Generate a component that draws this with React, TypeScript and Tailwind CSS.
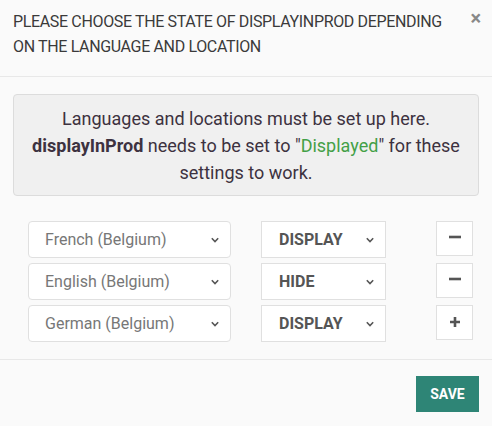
const rows = [
  { lang: 'French (Belgium)', state: 'DISPLAY', last: false },
  { lang: 'English (Belgium)', state: 'HIDE', last: false },
  { lang: 'German (Belgium)', state: 'DISPLAY', last: true },
]

function Chevron() {
  return (
    <svg width="10" height="7" viewBox="0 0 10 7" className="absolute right-[10px] top-1/2 -translate-y-1/2 pointer-events-none">
      <path d="M1.8 1.8 L5 5 L8.2 1.8" fill="none" stroke="#555" strokeWidth="1.6" />
    </svg>
  )
}

export default function App() {
  return (
    <div className="w-[492px] h-[426px] bg-[#fafafa] font-['Roboto',sans-serif] flex flex-col">
      <div className="h-[77px] border-b border-[#e8e8e8] flex justify-between pl-[13px] pr-[11px] pt-[9px]">
        <h2 className="text-[16px] leading-[25px] tracking-[-0.35px] text-[#3a3a3a] uppercase w-[450px]">
          Please choose the state of displayInProd depending on the language and location
        </h2>
        <span className="text-[#888] text-[20px] leading-[20px] font-bold mt-[-1px]">×</span>
      </div>

      <div className="flex-1 px-[13px] pt-[17px]">
        <div className="h-[102px] bg-[#f0f0f0] border border-[#dcdcdc] rounded-[4px] flex flex-col items-center justify-center text-center text-[18px] leading-[27px] text-[#3d3240] px-3">
          <p>Languages and locations must be set up here.</p>
          <p>
            <b className="font-bold">displayInProd</b> needs to be set to "<span className="text-[#43a047]">Displayed</span>" for these
          </p>
          <p>settings to work.</p>
        </div>

        <div className="mt-[25px] flex flex-col gap-[5px] pl-[15px]">
          {rows.map((r, i) => (
            <div key={i} className="flex items-start h-[37px]">
              <div className="relative w-[203px] h-[37px] bg-white border border-[#e0e0e0] rounded-[4px] flex items-center pl-[16px] text-[16px] text-[#777]">
                {r.lang}
                <Chevron />
              </div>
              <div className="relative ml-[30px] w-[125px] h-[37px] bg-white border border-[#e0e0e0] flex items-center pl-[17px] text-[16px] font-bold text-[#555]">
                {r.state}
                <Chevron />
              </div>
              <button className="ml-[50px] w-[37px] h-[35px] bg-white border border-[#e0e0e0] flex items-center justify-center">
                {r.last ? (
                  <svg width="12" height="12" viewBox="0 0 12 12" className="-mt-[2px]">
                    <path d="M6 1 V11 M1 6 H11" stroke="#555" strokeWidth="2.6" />
                  </svg>
                ) : (
                  <svg width="12" height="12" viewBox="0 0 12 12" className="-mt-[4px]">
                    <path d="M0 6 H12" stroke="#555" strokeWidth="2.6" />
                  </svg>
                )}
              </button>
            </div>
          ))}
        </div>
      </div>

      <div className="h-[67px] border-t border-[#e8e8e8] flex justify-end items-start pt-[16px] pr-[13px]">
        <button className="w-[63px] h-[36px] bg-[#2e8576] text-white text-[14px] font-bold">SAVE</button>
      </div>
    </div>
  )
}
